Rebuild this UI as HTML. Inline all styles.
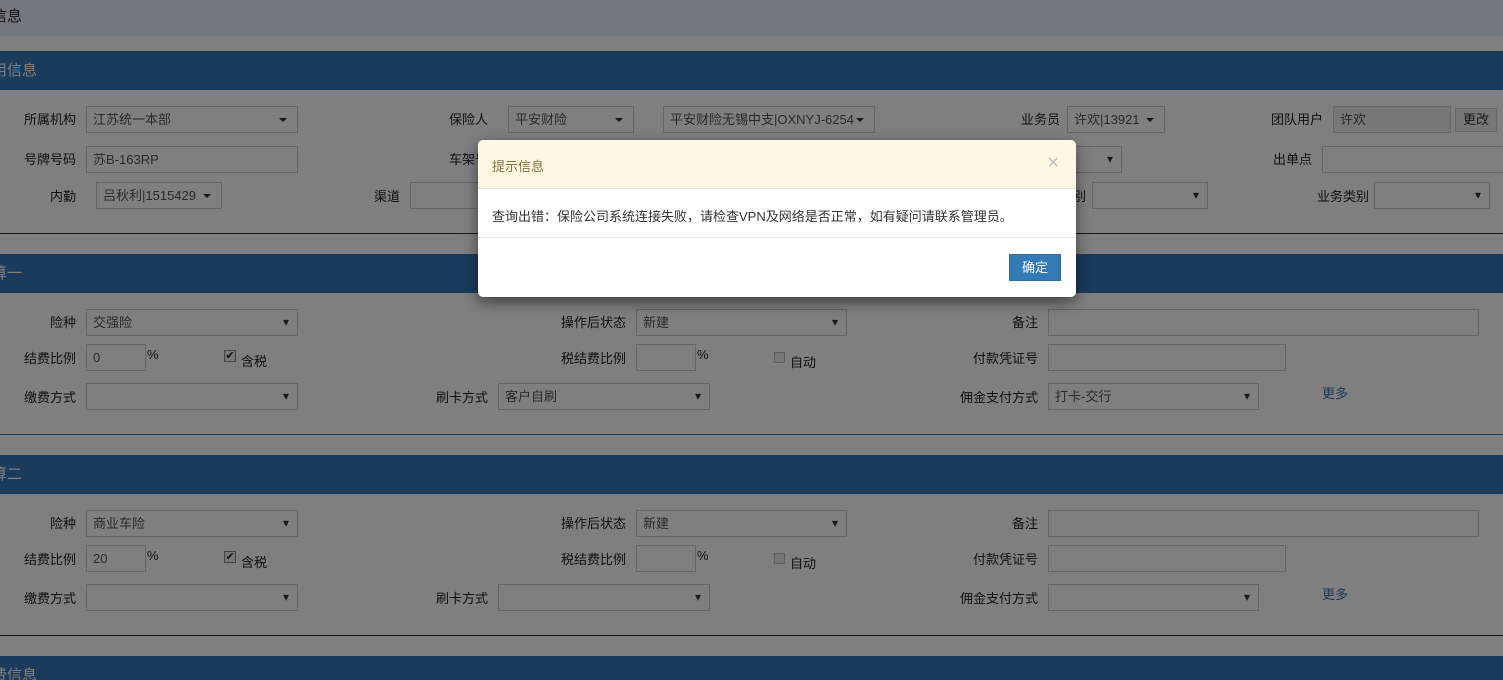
<!DOCTYPE html>
<html style="height:680px;overflow:hidden"><head><meta charset="utf-8"><style>
*{box-sizing:border-box;margin:0;padding:0}
body{width:1503px;height:680px;overflow:hidden;position:relative;background:#fff;font-family:"Liberation Sans","Noto Sans CJK SC",sans-serif;font-size:13px;color:#222}
.a{position:absolute;white-space:nowrap}
.top{left:0;top:0;width:1503px;height:36px;background:#e6eeff;font-size:15px;line-height:34px;text-indent:-8px}
.hd{left:0;width:1503px;height:39px;background:#3676b8;color:#fff;font-size:15px;line-height:39px;text-indent:-8px}
.ln{left:0;width:1503px;height:1px;background:#333}
.lb{text-align:right;line-height:26px}
.in{height:27px;border:1px solid #ccc;background:#fff;line-height:25px;padding-left:6px;color:#555}
.sel:after{content:"▾";position:absolute;right:8px;top:0;font-size:12px;color:#333}
.dd:after{content:"";position:absolute;right:10px;top:11px;border-left:4px solid transparent;border-right:4px solid transparent;border-top:4px solid #333}
.dis{background:#eee}
.btn{height:24px;border:1px solid #ccc;background:#fff;line-height:22px;text-align:center;color:#333}
.ov{left:0;top:0;width:1503px;height:680px;background:rgba(0,0,0,.5)}
.modal{left:478px;top:140px;width:598px;height:157px;background:#fff;border-radius:5px;box-shadow:0 5px 15px rgba(0,0,0,.5);overflow:hidden}
.lk{color:#3676b8}
</style></head><body>
<div class="a top">信息</div>
<div class="a hd" style="top:51px">用信息</div>
<div class="a lb" style="left:0;top:107px;width:76px">所属机构</div>
<div class="a in dd" style="left:86px;top:106px;width:212px">江苏统一本部</div>
<div class="a lb" style="left:400px;top:107px;width:88px">保险人</div>
<div class="a in dd" style="left:508px;top:106px;width:126px">平安财险</div>
<div class="a in dd" style="left:663px;top:106px;width:212px;overflow:hidden;padding-right:20px">平安财险无锡中支|OXNYJ-6254</div>
<div class="a lb" style="left:980px;top:107px;width:80px">业务员</div>
<div class="a in dd" style="left:1067px;top:106px;width:98px">许欢|13921</div>
<div class="a lb" style="left:1240px;top:107px;width:83px">团队用户</div>
<div class="a in dis" style="left:1333px;top:106px;width:118px">许欢</div>
<div class="a btn" style="left:1455px;top:108px;width:42px;background:#eee">更改</div>
<div class="a lb" style="left:0;top:147px;width:76px">号牌号码</div>
<div class="a in" style="left:86px;top:146px;width:212px">苏B-163RP</div>
<div class="a lb" style="left:400px;top:147px;width:88px">车架号</div>
<div class="a in sel" style="left:1000px;top:146px;width:122px"></div>
<div class="a lb" style="left:1240px;top:147px;width:72px">出单点</div>
<div class="a in" style="left:1322px;top:146px;width:190px"></div>
<div class="a lb" style="left:0;top:184px;width:76px">内勤</div>
<div class="a in dd" style="left:96px;top:182px;width:126px">吕秋利|1515429</div>
<div class="a lb" style="left:330px;top:184px;width:70px">渠道</div>
<div class="a in" style="left:410px;top:182px;width:100px"></div>
<div class="a lb" style="left:1000px;top:184px;width:86px">类别</div>
<div class="a in sel" style="left:1092px;top:182px;width:116px"></div>
<div class="a lb" style="left:1280px;top:184px;width:89px">业务类别</div>
<div class="a in sel" style="left:1374px;top:182px;width:116px"></div>
<div class="a ln" style="top:233px"></div>

<div class="a hd" style="top:254px">算一</div>
<div class="a lb" style="left:0;top:310px;width:76px">险种</div>
<div class="a in sel" style="left:86px;top:309px;width:212px">交强险</div>
<div class="a lb" style="left:520px;top:310px;width:106px">操作后状态</div>
<div class="a in sel" style="left:636px;top:309px;width:211px">新建</div>
<div class="a lb" style="left:960px;top:310px;width:78px">备注</div>
<div class="a in" style="left:1048px;top:309px;width:431px"></div>
<div class="a lb" style="left:0;top:346px;width:76px">结费比例</div>
<div class="a in" style="left:86px;top:344px;width:60px">0</div>
<div class="a" style="left:147px;top:347px">%</div>
<div class="a" style="left:224px;top:350px;width:12px;height:12px;border:1px solid #888;background:#eee;font-size:11px;line-height:10px;text-align:center">✔</div>
<div class="a" style="left:241px;top:351px">含税</div>
<div class="a lb" style="left:520px;top:346px;width:106px">税结费比例</div>
<div class="a in" style="left:636px;top:344px;width:60px"></div>
<div class="a" style="left:697px;top:347px">%</div>
<div class="a" style="left:774px;top:352px;width:11px;height:11px;border:1px solid #bbb;background:#eee"></div>
<div class="a" style="left:790px;top:352px">自动</div>
<div class="a lb" style="left:940px;top:346px;width:98px">付款凭证号</div>
<div class="a in" style="left:1048px;top:344px;width:238px"></div>
<div class="a lb" style="left:0;top:385px;width:76px">缴费方式</div>
<div class="a in sel" style="left:86px;top:383px;width:212px"></div>
<div class="a lb" style="left:400px;top:385px;width:88px">刷卡方式</div>
<div class="a in sel" style="left:498px;top:383px;width:212px">客户自刷</div>
<div class="a lb" style="left:940px;top:385px;width:98px">佣金支付方式</div>
<div class="a in sel" style="left:1048px;top:383px;width:211px">打卡-交行</div>
<div class="a lk" style="left:1322px;top:383px">更多</div>
<div class="a ln" style="top:434px;background:#3676b8"></div>

<div class="a hd" style="top:455px">算二</div>
<div class="a lb" style="left:0;top:511px;width:76px">险种</div>
<div class="a in sel" style="left:86px;top:510px;width:212px">商业车险</div>
<div class="a lb" style="left:520px;top:511px;width:106px">操作后状态</div>
<div class="a in sel" style="left:636px;top:510px;width:211px">新建</div>
<div class="a lb" style="left:960px;top:511px;width:78px">备注</div>
<div class="a in" style="left:1048px;top:510px;width:431px"></div>
<div class="a lb" style="left:0;top:547px;width:76px">结费比例</div>
<div class="a in" style="left:86px;top:545px;width:60px">20</div>
<div class="a" style="left:147px;top:548px">%</div>
<div class="a" style="left:224px;top:551px;width:12px;height:12px;border:1px solid #888;background:#eee;font-size:11px;line-height:10px;text-align:center">✔</div>
<div class="a" style="left:241px;top:552px">含税</div>
<div class="a lb" style="left:520px;top:547px;width:106px">税结费比例</div>
<div class="a in" style="left:636px;top:545px;width:60px"></div>
<div class="a" style="left:697px;top:548px">%</div>
<div class="a" style="left:774px;top:553px;width:11px;height:11px;border:1px solid #bbb;background:#eee"></div>
<div class="a" style="left:790px;top:553px">自动</div>
<div class="a lb" style="left:940px;top:547px;width:98px">付款凭证号</div>
<div class="a in" style="left:1048px;top:545px;width:238px"></div>
<div class="a lb" style="left:0;top:586px;width:76px">缴费方式</div>
<div class="a in sel" style="left:86px;top:584px;width:212px"></div>
<div class="a lb" style="left:400px;top:586px;width:88px">刷卡方式</div>
<div class="a in sel" style="left:498px;top:584px;width:212px"></div>
<div class="a lb" style="left:940px;top:586px;width:98px">佣金支付方式</div>
<div class="a in sel" style="left:1048px;top:584px;width:211px"></div>
<div class="a lk" style="left:1322px;top:584px">更多</div>
<div class="a ln" style="top:635px"></div>
<div class="a hd" style="top:656px;height:24px;line-height:39px;overflow:hidden">费信息</div>

<div class="a ov"></div>
<div class="a modal">
  <div style="height:49px;background:#fcf8e3;border-bottom:1px solid #e5e5e5;position:relative">
    <div class="a" style="left:14px;top:16px;color:#8a6d3b;font-size:13px">提示信息</div>
    <div class="a" style="right:17px;top:12px;color:#bbb;font-size:20px">×</div>
  </div>
  <div style="height:49px;border-bottom:1px solid #e5e5e5;position:relative">
    <div class="a" style="left:14px;top:17px;color:#333">查询出错：保险公司系统连接失败，请检查VPN及网络是否正常，如有疑问请联系管理员。</div>
  </div>
  <div class="a" style="left:531px;top:114px;width:52px;height:27px;background:#337ab7;border:1px solid #2e6da4;color:#fff;line-height:25px;text-align:center">确定</div>
</div>
</body></html>
